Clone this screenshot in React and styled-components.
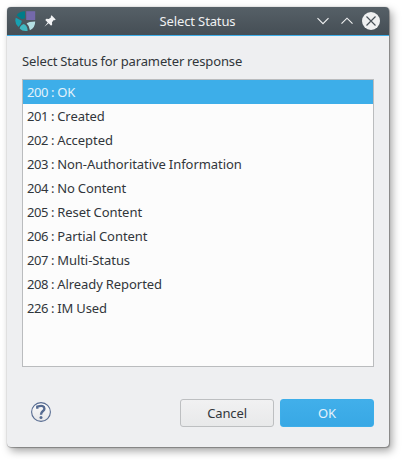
import React, { useState } from "react";
import styled, { createGlobalStyle, css } from "styled-components";

const GlobalStyle = createGlobalStyle`
  * { box-sizing: border-box; }
  body {
    margin: 0;
    background: #fff;
    font-family: "Noto Sans", sans-serif;
    font-size: 13px;
    color: #31363b;
  }
`;

const Desktop = styled.main`
  width: 402px;
  height: 460px;
  padding: 7px;
  overflow: hidden;
`;

const Dialog = styled.section`
  display: flex;
  flex-direction: column;
  width: 382px;
  height: 440px;
  border-radius: 4px;
  background: #eeeff1;
  box-shadow: 0 0 1px rgba(0, 0, 0, 0.5), 1px 1px 1px rgba(0, 0, 0, 0.25), 3px 4px 8px rgba(0, 0, 0, 0.36);
`;

const TitleBar = styled.header`
  display: grid;
  grid-template-columns: 76px 1fr 76px;
  align-items: center;
  height: 29px;
  padding: 0 9px 0 8px;
  border-bottom: 1px solid #3daee9;
  border-radius: 4px 4px 0 0;
  background: linear-gradient(#566067, #454e55);
  color: #eff0f1;
`;

const TitleGroup = styled.div`
  display: flex;
  align-items: center;
  gap: ${({ $gap }) => $gap}px;
  justify-content: ${({ $end }) => ($end ? "flex-end" : "flex-start")};
  svg { display: block; }
`;

const Title = styled.h1`
  margin: 0;
  font-size: 13px;
  font-weight: 400;
  line-height: 28px;
  letter-spacing: -0.13px;
  text-align: center;
`;

const Body = styled.div`
  display: flex;
  flex: 1;
  flex-direction: column;
  padding: 16px 15px 20px;
`;

const Prompt = styled.label`
  height: 27px;
  line-height: 19px;
  letter-spacing: -0.12px;
  word-spacing: -0.4px;
`;

const StatusList = styled.ul`
  height: 288px;
  margin: 0;
  padding: 0;
  border: 1px solid #babcbe;
  background: #fcfcfc;
  list-style: none;
`;

const StatusRow = styled.li`
  height: 24px;
  padding-left: 4px;
  line-height: 24px;
  letter-spacing: -0.05px;
  word-spacing: -0.4px;
  white-space: pre;
  ${({ $selected }) => $selected && css`
    background: #3daee9;
    color: #e4f2fb;
  `}
`;

const StatusCode = styled.span`
  letter-spacing: -0.4px;
  word-spacing: 0;
`;

const Footer = styled.footer`
  display: flex;
  align-items: center;
  gap: 6px;
  margin-top: auto;
`;

const HelpButton = styled.button`
  display: flex;
  margin: 0 auto 2px 9px;
  padding: 0;
  border: 0;
  background: none;
`;

const Button = styled.button`
  width: 94px;
  height: 28px;
  padding: 0;
  border: 1px solid ${({ $primary }) => ($primary ? "#3daee9" : "#bdbfc1")};
  border-radius: 3px;
  background: ${({ $primary }) => ($primary ? "linear-gradient(#41afea, #38a8e5)" : "linear-gradient(#f1f1f2, #e8e9ea)")};
  color: ${({ $primary }) => ($primary ? "#e4f2fb" : "#31363b")};
  font: inherit;
  line-height: 26px;
  letter-spacing: -0.12px;
`;

const AppLogo = () => (
  <svg width="22" height="22" viewBox="0 0 22 22">
    <path d="M10 1.2V8.2L6.5 9.2 1.5 5.2Q4.5 1.2 10 1.2Z" fill="#007c89" />
    <path d="M.8 7.8 6.7 10.7Q7 14 3.4 17 -.9 13.5.8 7.8Z" fill="#16a0b1" />
    <path d="M8.8 14Q12.5 15.5 12.7 20.8 7.8 21.8 4.6 18.4 5.2 15.2 8.8 14Z" fill="#41b8c2" />
    <path d="M11.6 13.6Q13.5 11.5 20.2 11.4 20.3 17.6 14.9 20.2 14.6 16 11.6 13.6Z" fill="#b4dfe3" />
    <path d="M11.2 1.2h9v8.8h-9Z" fill="#7469ab" />
  </svg>
);

const PinIcon = () => (
  <svg width="12" height="12" viewBox="0 0 12 12">
    <path d="M7.6.3 11.7 4.4 10.8 5.2 9.8 5 8 7.2 8.2 9.6 7.1 10.7 4.6 8.3.4 11.8 3.7 7.4 1.3 4.9 2.4 3.8 4.8 4 7 2.2 6.8 1.2Z" fill="#f2f3f4" />
  </svg>
);

const ChevronIcon = styled.svg`
  margin-right: ${({ $last }) => ($last ? "-3px" : "0")};
`;

const Chevron = ({ d, last }) => (
  <ChevronIcon width="12" height="8" viewBox="0 0 12 8" $last={last}>
    <path d={d} fill="none" stroke="#eff0f1" strokeWidth="1.15" />
  </ChevronIcon>
);

const CloseIcon = () => (
  <svg width="18" height="18" viewBox="0 0 18 18">
    <circle cx="9" cy="9" r="9" fill="#eff0f1" />
    <path d="m4.5 4.5 9 9m0-9-9 9" stroke="#475057" strokeWidth="1.15" />
  </svg>
);

const HelpIcon = () => (
  <svg width="20" height="20" viewBox="0 0 20 20">
    <defs>
      <linearGradient id="help-face" x2="0" y2="1">
        <stop stopColor="#fcfcfc" />
        <stop offset="1" stopColor="#e6e6e8" />
      </linearGradient>
    </defs>
    <circle cx="10" cy="10" r="9.4" fill="url(#help-face)" stroke="#566b91" strokeWidth="1.1" />
    <path d="M6.3 6.8V4.6Q13.4 2.5 13.4 6.7C13.4 9.2 10 9 10 12.8" fill="none" stroke="#566b91" strokeWidth="2.4" />
    <circle cx="10" cy="15.4" r="1.5" fill="#566b91" />
  </svg>
);

const statuses = [
  ["200", "OK"],
  ["201", "Created"],
  ["202", "Accepted"],
  ["203", "Non-Authoritative Information"],
  ["204", "No Content"],
  ["205", "Reset Content"],
  ["206", "Partial Content"],
  ["207", "Multi-Status"],
  ["208", "Already Reported"],
  ["226", "IM Used"],
];

export default function App() {
  const [selected, setSelected] = useState("200");
  return (
    <Desktop>
      <GlobalStyle />
      <Dialog>
        <TitleBar>
          <TitleGroup $gap={7}>
            <AppLogo />
            <PinIcon />
          </TitleGroup>
          <Title>Select Status</Title>
          <TitleGroup $gap={12} $end>
            <Chevron d="m.5 1.2 5.5 5.5 5.5-5.5" />
            <Chevron d="m.5 6.7 5.5-5.5 5.5 5.5" last />
            <CloseIcon />
          </TitleGroup>
        </TitleBar>
        <Body>
          <Prompt>Select Status for parameter response</Prompt>
          <StatusList>
            {statuses.map(([code, label]) => (
              <StatusRow key={code} $selected={code === selected} onClick={() => setSelected(code)}>
                <StatusCode>{code} : </StatusCode>{label}
              </StatusRow>
            ))}
          </StatusList>
          <Footer>
            <HelpButton aria-label="Help"><HelpIcon /></HelpButton>
            <Button>Cancel</Button>
            <Button $primary>OK</Button>
          </Footer>
        </Body>
      </Dialog>
    </Desktop>
  );
}
